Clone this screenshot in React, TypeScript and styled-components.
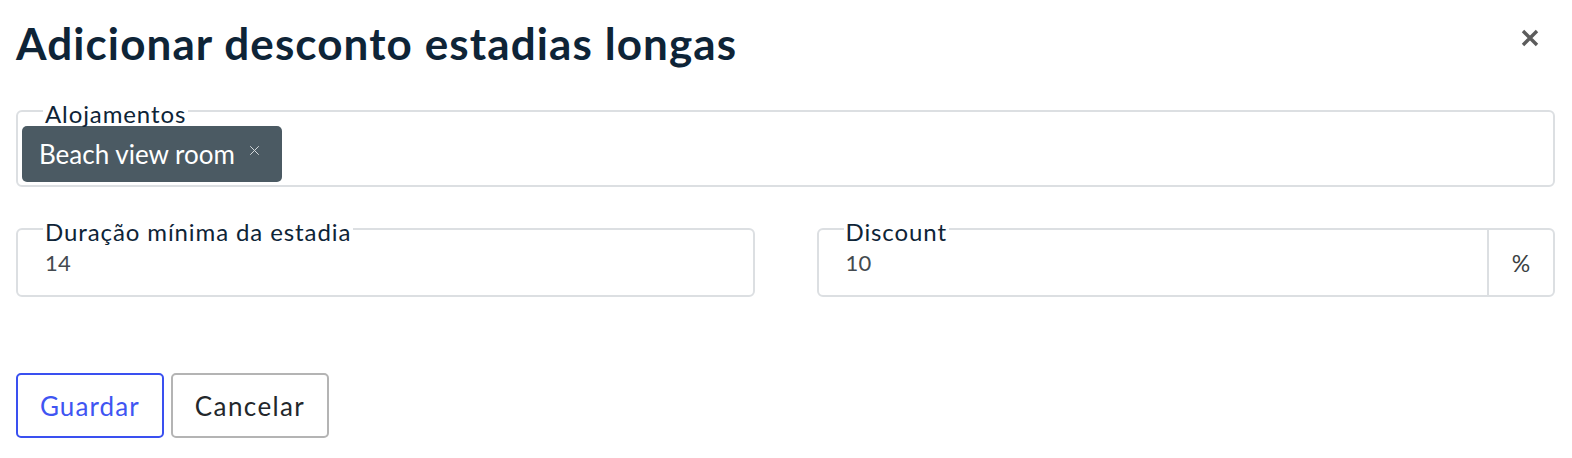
import React from "react";
import styled, { createGlobalStyle } from "styled-components";

const GlobalStyle = createGlobalStyle`
  body {
    margin: 0;
    background: #ffffff;
    font-family: Lato, "Open Sans", sans-serif;
  }
`;

const Dialog = styled.div`
  padding: 0 17px 0 16px;
`;

const Header = styled.div`
  display: flex;
  justify-content: space-between;
  align-items: flex-start;
  padding-top: 18px;
  margin-bottom: 42px;
`;

const Title = styled.h1`
  margin: 0;
  font-size: 44px;
  line-height: 50px;
  font-weight: 700;
  letter-spacing: 1.1px;
  color: #0e2437;
`;

const CloseButton = styled.button`
  border: none;
  background: none;
  padding: 0;
  margin: 11px 16px 0 0;
  width: 18px;
  height: 18px;
  color: #5c5c5c;
  cursor: pointer;
`;

const Field = styled.div<{ $tall?: boolean }>`
  position: relative;
  display: flex;
  align-items: stretch;
  box-sizing: border-box;
  height: ${(p) => (p.$tall ? "77px" : "69px")};
  border: 2px solid #dcdfe2;
  border-radius: 6px;
  background: #fff;
`;

const FieldLabel = styled.span`
  position: absolute;
  top: -10px;
  left: 25px;
  z-index: 1;
  padding: 0 2px;
  background: #fff;
  font-size: 24px;
  line-height: 1;
  letter-spacing: 0.9px;
  color: #0e2437;
`;

const ChipList = styled.div`
  display: flex;
  gap: 6px;
  padding: 14px 4px 3px;
`;

const Chip = styled.div`
  display: flex;
  align-items: center;
  gap: 14px;
  height: 56px;
  padding: 0 22px 0 17px;
  border-radius: 5px;
  background: #4b5a63;
  color: #fff;
  font-size: 26px;
`;

const ChipRemove = styled.span`
  display: block;
  align-self: flex-start;
  margin-top: 19px;
  width: 11px;
  height: 11px;
  color: #d6dadd;
`;

const Value = styled.div`
  flex: 1;
  padding: 20px 27px 0;
  font-size: 22px;
  line-height: 26px;
  letter-spacing: 0.3px;
  color: #444a4f;
`;

const Addon = styled.div`
  display: flex;
  align-items: center;
  justify-content: center;
  width: 64px;
  border-left: 2px solid #dcdfe2;
  font-size: 23px;
  color: #3b3f43;
`;

const Row = styled.div`
  display: grid;
  grid-template-columns: 1fr 1fr;
  gap: 62px;
  margin-top: 41px;
`;

const Actions = styled.div`
  display: flex;
  gap: 7px;
  margin-top: 76px;
`;

const Button = styled.button<{ $primary?: boolean }>`
  height: 65px;
  padding: 0 22px;
  border: 2px solid ${(p) => (p.$primary ? "#3a50f0" : "#b4b4b4")};
  border-radius: 5px;
  background: #fff;
  font-family: Lato, sans-serif;
  font-size: 26px;
  letter-spacing: ${(p) => (p.$primary ? "1.1px" : "1.4px")};
  color: ${(p) => (p.$primary ? "#3f55f2" : "#23272b")};
  cursor: pointer;
`;

const CrossIcon = ({ width = 3 }: { width?: number }) => (
  <svg viewBox="0 0 18 18" width="100%" height="100%" style={{ display: "block" }}>
    <path d="M2 2L16 16M16 2L2 16" stroke="currentColor" strokeWidth={width} strokeLinecap="butt" />
  </svg>
);

export default function App() {
  return (
    <>
      <GlobalStyle />
      <Dialog>
        <Header>
          <Title>Adicionar desconto estadias longas</Title>
          <CloseButton aria-label="Fechar">
            <CrossIcon width={3.4} />
          </CloseButton>
        </Header>

        <Field $tall>
          <FieldLabel>Alojamentos</FieldLabel>
          <ChipList>
            <Chip>
              Beach view room
              <ChipRemove>
                <CrossIcon width={1.6} />
              </ChipRemove>
            </Chip>
          </ChipList>
        </Field>

        <Row>
          <Field>
            <FieldLabel>Duração mínima da estadia</FieldLabel>
            <Value>14</Value>
          </Field>
          <Field>
            <FieldLabel>Discount</FieldLabel>
            <Value>10</Value>
            <Addon>%</Addon>
          </Field>
        </Row>

        <Actions>
          <Button $primary>Guardar</Button>
          <Button>Cancelar</Button>
        </Actions>
      </Dialog>
    </>
  );
}
